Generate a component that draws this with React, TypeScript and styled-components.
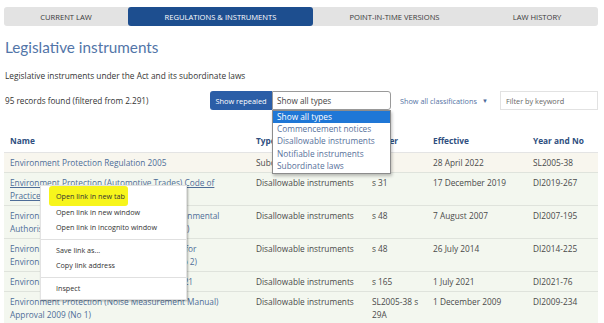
import React from 'react';
import styled, { createGlobalStyle } from 'styled-components';

const GlobalStyle = createGlobalStyle`
  html, body {
    margin: 0;
    padding: 0;
    background: #fff;
  }
  body {
    font-family: "Open Sans", "Noto Sans", sans-serif;
    color: #444;
  }
`;

const Page = styled.div`
  position: relative;
  width: 604px;
  height: 323px;
  overflow: hidden;
  padding: 7px 6px 0 4px;
  box-sizing: border-box;
`;

const Tabs = styled.nav`
  display: grid;
  grid-template-columns: 124px 185px 163px 122px;
  height: 19px;
  background: #e3e3e3;
  border-radius: 3px;
`;

const Tab = styled.div<{ $active?: boolean }>`
  display: flex;
  align-items: center;
  justify-content: center;
  font-size: 7.6px;
  text-transform: uppercase;
  color: ${p => (p.$active ? '#fff' : '#3a3a3a')};
  background: ${p => (p.$active ? '#1d4e8f' : 'transparent')};
  border-radius: 3px;
`;

const Title = styled.h1`
  margin: 11px 0 0 1px;
  font-family: Lato, "Open Sans", sans-serif;
  font-size: 15.3px;
  font-weight: 400;
  line-height: 20px;
  color: #5275a8;
`;

const Intro = styled.p`
  margin: 14px 0 0 1px;
  font-size: 8.3px;
  line-height: 10px;
  color: #333;
`;

const Toolbar = styled.div`
  display: flex;
  align-items: center;
  justify-content: space-between;
  margin-top: 10px;
  height: 19px;
`;

const Count = styled.span`
  font-size: 8.2px;
  color: #333;
  padding-left: 1px;
`;

const Filters = styled.div`
  display: flex;
  align-items: center;
  height: 19px;
`;

const RepealedButton = styled.button`
  height: 19px;
  width: 62px;
  padding: 0;
  border: none;
  border-radius: 3px 0 0 3px;
  background: #2b5ea7;
  color: #fff;
  font-family: inherit;
  font-size: 7.4px;
`;

const SelectWrap = styled.div`
  position: relative;
  width: 119px;
  height: 19px;
`;

const SelectBox = styled.div`
  height: 19px;
  box-sizing: border-box;
  border: 1px solid #9a9a9a;
  border-radius: 0 3px 3px 0;
  background: #fff;
  display: flex;
  align-items: center;
  padding-left: 4px;
  font-size: 8.2px;
  color: #444;
`;

const Options = styled.ul`
  position: absolute;
  top: 19px;
  left: 0;
  width: 119px;
  margin: 0;
  padding: 0 0 1px 0;
  list-style: none;
  background: #fff;
  border: 1px solid #8c8c8c;
  box-sizing: border-box;
  box-shadow: 1px 2px 3px rgba(0, 0, 0, 0.25);
  z-index: 3;
`;

const Option = styled.li<{ $selected?: boolean }>`
  height: 12.2px;
  line-height: 12.2px;
  padding-left: 4px;
  font-size: 8.3px;
  color: ${p => (p.$selected ? '#fff' : '#56709a')};
  background: ${p => (p.$selected ? '#1f77d6' : 'transparent')};
`;

const Classifications = styled.div`
  display: flex;
  align-items: center;
  gap: 5px;
  margin-left: 9px;
  width: 100px;
  font-size: 7.3px;
  color: #5373a3;
`;

const Caret = styled.span`
  font-size: 6px;
  color: #4a6a9a;
`;

const Keyword = styled.input`
  width: 98px;
  height: 19px;
  box-sizing: border-box;
  border: 1px solid #e2e2e2;
  padding: 0 5px;
  font-family: inherit;
  font-size: 7.3px;
  color: #444;
  &::placeholder {
    color: #666;
  }
`;

const Table = styled.table`
  width: 594px;
  margin-top: 19px;
  border-collapse: collapse;
  table-layout: fixed;
`;

const Th = styled.th`
  text-align: left;
  font-size: 8.3px;
  font-weight: 700;
  color: #2f4f80;
  padding: 6px;
  border-bottom: 1px solid #e4e4e4;
`;

const Row = styled.tr<{ $tone: 'beige' | 'green' }>`
  background: ${p => (p.$tone === 'beige' ? '#f8f6ee' : '#f3f7ef')};
  border-bottom: 1px solid #dfe3dc;
`;

const Td = styled.td`
  vertical-align: top;
  padding: 3px 6px 3px 6px;
  font-size: 8.3px;
  line-height: 13px;
  color: #4a4a4a;
`;

const NameTd = styled(Td)`
  padding-right: 14px;
`;

const NameLink = styled.a<{ $hover?: boolean }>`
  color: #4e6d98;
  text-decoration: ${p => (p.$hover ? 'underline' : 'none')};
`;

const Menu = styled.div`
  position: absolute;
  left: 40px;
  top: 185px;
  width: 145px;
  padding: 3px 0;
  background: #fff;
  border: 1px solid #e3e3e3;
  box-shadow: 1px 1px 2px rgba(0, 0, 0, 0.3);
  z-index: 4;
`;

const MenuItem = styled.div`
  height: 15.5px;
  line-height: 15.5px;
  padding-left: 15px;
  font-size: 7.2px;
  color: #333;
`;

const Marked = styled.span`
  background: #f7f51b;
  padding: 5px 3px 5px 7px;
  margin-left: -7px;
  border-radius: 3px;
`;

const Separator = styled.div`
  height: 1px;
  margin: 3px 0;
  background: #e0e0e0;
`;

const columns: [string, number][] = [
  ['Name', 246],
  ['Type', 116],
  ['Power', 61],
  ['Effective', 100],
  ['Year and No', 71],
];

const rows = [
  {
    name: 'Environment Protection Regulation 2005',
    type: 'Subordinate laws',
    power: 's 5',
    effective: '28 April 2022',
    year: 'SL2005-38',
    tone: 'beige' as const,
  },
  {
    name: 'Environment Protection (Automotive Trades) Code of Practice 2019',
    type: 'Disallowable instruments',
    power: 's 31',
    effective: '17 December 2019',
    year: 'DI2019-267',
    tone: 'green' as const,
    hover: true,
  },
  {
    name: 'Environment Protection (Guidelines for Environmental Authorisation Fees) Determination 2007 (No 1)',
    type: 'Disallowable instruments',
    power: 's 48',
    effective: '7 August 2007',
    year: 'DI2007-195',
    tone: 'green' as const,
  },
  {
    name: 'Environment Protection (Fees for Application for Environmental Authorisation) Notice 2014 (No 2)',
    type: 'Disallowable instruments',
    power: 's 48',
    effective: '26 July 2014',
    year: 'DI2014-225',
    tone: 'green' as const,
  },
  {
    name: 'Environment Protection (Fees) Instrument 2021',
    type: 'Disallowable instruments',
    power: 's 165',
    effective: '1 July 2021',
    year: 'DI2021-76',
    tone: 'green' as const,
  },
  {
    name: 'Environment Protection (Noise Measurement Manual) Approval 2009 (No 1)',
    type: 'Disallowable instruments',
    power: 'SL2005-38 s 29A',
    effective: '1 December 2009',
    year: 'DI2009-234',
    tone: 'green' as const,
  },
];

const typeOptions = [
  'Show all types',
  'Commencement notices',
  'Disallowable instruments',
  'Notifiable instruments',
  'Subordinate laws',
];

export default function App() {
  return (
    <Page>
      <GlobalStyle />
      <Tabs>
        <Tab>Current law</Tab>
        <Tab $active>Regulations &amp; instruments</Tab>
        <Tab>Point-in-time versions</Tab>
        <Tab>Law history</Tab>
      </Tabs>

      <Title>Legislative instruments</Title>
      <Intro>Legislative instruments under the Act and its subordinate laws</Intro>

      <Toolbar>
        <Count>95 records found (filtered from 2.291)</Count>
        <Filters>
          <RepealedButton>Show repealed</RepealedButton>
          <SelectWrap>
            <SelectBox>Show all types</SelectBox>
            <Options>
              {typeOptions.map((o, i) => (
                <Option key={o} $selected={i === 0}>
                  {o}
                </Option>
              ))}
            </Options>
          </SelectWrap>
          <Classifications>
            Show all classifications <Caret>▼</Caret>
          </Classifications>
          <Keyword placeholder="Filter by keyword" />
        </Filters>
      </Toolbar>

      <Table>
        <colgroup>
          {columns.map(([label, w]) => (
            <col key={label} style={{ width: w }} />
          ))}
        </colgroup>
        <thead>
          <tr>
            {columns.map(([label]) => (
              <Th key={label}>{label}</Th>
            ))}
          </tr>
        </thead>
        <tbody>
          {rows.map(r => (
            <Row key={r.year} $tone={r.tone}>
              <NameTd>
                <NameLink $hover={r.hover}>{r.name}</NameLink>
              </NameTd>
              <Td>{r.type}</Td>
              <Td>{r.power}</Td>
              <Td>{r.effective}</Td>
              <Td>{r.year}</Td>
            </Row>
          ))}
        </tbody>
      </Table>

      <Menu>
        <MenuItem>
          <Marked>Open link in new tab</Marked>
        </MenuItem>
        <MenuItem>Open link in new window</MenuItem>
        <MenuItem>Open link in incognito window</MenuItem>
        <Separator />
        <MenuItem>Save link as...</MenuItem>
        <MenuItem>Copy link address</MenuItem>
        <Separator />
        <MenuItem>Inspect</MenuItem>
      </Menu>
    </Page>
  );
}
